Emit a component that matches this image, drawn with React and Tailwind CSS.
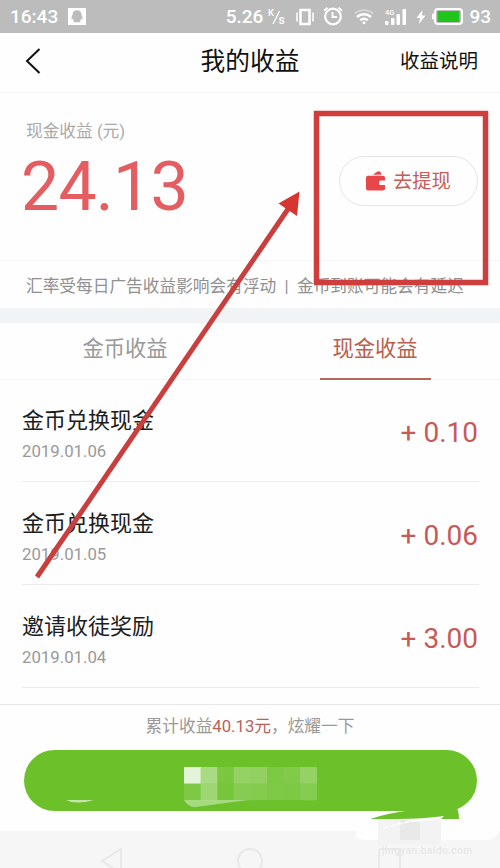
import React from "react";

const records = [
  { id: 1, title: "金币兑换现金", date: "2019.01.06", amount: "0.10" },
  { id: 2, title: "金币兑换现金", date: "2019.01.05", amount: "0.06" },
  { id: 3, title: "邀请收徒奖励", date: "2019.01.04", amount: "3.00" },
];

// x, y, opacity of each blurred block on the share button
const mosaic = [
  [0, 0, 0.82],
  [1, 0, 0.42],
  [2, 0, 0.1],
  [3, 0, 0.28],
  [4, 0, 0.26],
  [5, 0, 0.12],
  [6, 0, 0.15],
  [7, 0, 0.28],
  [0, 1, 0.12],
  [1, 1, 0.34],
  [2, 1, 0.08],
  [3, 1, 0.19],
  [4, 1, 0.17],
  [5, 1, 0.13],
  [6, 1, 0.12],
  [7, 1, 0.18],
];

const StatusBar = () => (
  <div className="h-[33px] shrink-0 bg-[#bcbcbc] flex items-center justify-between pl-[10px] pr-[9px] text-white">
    <div className="flex items-center gap-[10px]">
      <span className="text-[19px] leading-none font-medium">16:43</span>
      <svg width="18" height="17" viewBox="0 0 18 17">
        <rect width="18" height="17" fill="#fff" />
        <path
          d="M9 2.2c-3 0-4.5 2-4.5 4.6C3.8 8.5 3.2 10 3.6 11.5l1.2-.7c.3 1 .7 1.7 1.2 2.2-.9.5-.8 1.2.3 1.2h5.4c1.1 0 1.2-.7.3-1.2.5-.5.9-1.2 1.2-2.2l1.2.7c.4-1.5-.2-3-.9-4.7C13.5 4.2 12 2.200 9 2.200z"
          fill="#bcbcbc"
        />
      </svg>
    </div>

    <div className="flex items-center">
      <span className="text-[19px] leading-none font-medium">5.26</span>
      <svg className="ml-[5px]" width="18" height="20" viewBox="0 0 18 20" fill="#fff">
        <text x="0" y="9" fontSize="9.500" fontWeight="500">K</text>
        <path d="M5 17 11.500 4" stroke="#fff" strokeWidth="1.300" />
        <text x="10.500" y="17" fontSize="12" fontWeight="500">s</text>
      </svg>
      <svg className="ml-[10px]" width="18" height="18" viewBox="0 0 18 18" fill="none" stroke="#fff">
        <rect x="4.500" y="2" width="9" height="14" strokeWidth="2.500" />
        <path d="M1 4.500v9M17 4.500v9" strokeWidth="1.500" />
      </svg>
      <svg className="ml-[9px]" width="20" height="20" viewBox="0 0 20 20" fill="none" stroke="#fff" strokeWidth="2.200">
        <circle cx="10" cy="9.500" r="7.800" />
        <path d="M9.500 5v5h4.500" strokeWidth="1.900" />
        <path d="M1 3.700 4.500.7M19 3.700 15.500.7" strokeWidth="1.800" />
      </svg>
      <svg className="ml-[11px]" width="20" height="17" viewBox="0 0 20 17" fill="none" stroke="#fff">
        <path d="M1 5.500c5-4.600 13-4.600 18 0" strokeWidth="1.800" opacity=".4" />
        <path d="M3 9c4-3.700 10-3.700 14 0" strokeWidth="2.500" />
        <path d="M6.300 12.300c2.200-1.900 5.200-1.900 7.400 0" strokeWidth="2.300" />
        <circle cx="10" cy="14.800" r="1.500" fill="#fff" stroke="none" />
      </svg>
      <svg className="ml-[11px]" width="22" height="18" viewBox="0 0 22 18" fill="#fff">
        <text x="0" y="7" fontSize="7.500" fontWeight="500">4G</text>
        <rect x="0" y="13" width="3.500" height="4" rx="1" />
        <rect x="6" y="10" width="3.500" height="7" rx="1" />
        <rect x="11.500" y="6" width="3.500" height="11" rx="1" />
        <rect x="17.500" y="1" width="3.500" height="16" rx="1" />
      </svg>
      <svg className="ml-[9px]" width="10" height="14" viewBox="0 0 10 14" fill="#fff">
        <path d="M6.500 0 .5 8H4l-1 6 6.500-8.500H6z" />
      </svg>
      <svg className="ml-[6px]" width="31" height="17" viewBox="0 0 31 17">
        <rect x="3" y="1" width="27" height="15" rx="3" fill="none" stroke="#fff" strokeWidth="2" />
        <rect x="0" y="5.500" width="3" height="6" rx="1" fill="#fff" />
        <rect x="5.500" y="3" width="22" height="11" fill="#1fc41c" />
      </svg>
      <span className="ml-[6px] text-[19px] leading-none font-medium">93</span>
    </div>
  </div>
);

const Header = () => (
  <header className="h-[60px] shrink-0 grid grid-cols-3 items-center pl-[25px] pr-[22px] border-b border-[#f5f5f5] text-[#111]">
    <svg className="mb-[4px]" width="16" height="26" viewBox="0 0 16 26" fill="none" stroke="#111" strokeWidth="2">
      <path d="M14.500 1 2 13l12.500 12" />
    </svg>
    <h1 className="pr-[3px] text-[24.700px] leading-none text-center whitespace-nowrap">我的收益</h1>
    <a className="pb-px text-[19.500px] leading-none text-right whitespace-nowrap">收益说明</a>
  </header>
);

const Balance = () => (
  <section className="h-[215px] shrink-0 flex flex-col">
    <div className="h-[168px] flex justify-between pl-[22px] pr-[22px] border-b border-[#f7f7f7]">
      <div className="pt-[30px]">
        <p className="pl-[4px] text-[16.700px] leading-[18px] text-[#aaa]">现金收益 (元)</p>
        <p className="mt-[6px] -ml-px text-[68px] leading-[80px] tracking-[-0.8px] text-[#e35d61]">24.13</p>
      </div>
      <button className="mt-[63px] w-[139px] h-[50px] rounded-full border-[1.500px] border-[#e5e5e5] flex items-center pl-[26px] gap-[7px] text-[19.300px] text-[#c75c58]">
        <svg width="20" height="20" viewBox="0 0 20 20" fill="#e8474a">
          <path d="M7 3.800Q11 0 13 .2q2 .3 2.500 3.600z" />
          <path d="M2 4.800h15a2 2 0 0 1 2 2V9.500h-4a2 2 0 0 0-2 2.200 2 2 0 0 0 2 2.300h4v3.500a2 2 0 0 1-2 2H2a2 2 0 0 1-2-2V6.800a2 2 0 0 1 2-2z" />
        </svg>
        <span className="pt-px leading-none whitespace-nowrap">去提现</span>
      </button>
    </div>
    <p className="flex-1 flex items-center pl-[26px] pt-[5px] text-[16.700px] leading-none text-[#909090] whitespace-pre">
      汇率受每日广告收益影响会有浮动  |  金币到账可能会有延迟
    </p>
  </section>
);

const Tabs = () => (
  <div className="h-[57px] shrink-0 grid grid-cols-2 border-b border-[#f5f5f5] text-[21.300px] leading-none">
    <div className="flex justify-center pt-[15px] text-[#999]">金币收益</div>
    <div className="flex justify-center text-[#b9604f]">
      <span className="w-[111px] h-[57px] pt-[15px] text-center border-b-2 border-[#b5675c]">现金收益</span>
    </div>
  </div>
);

const RecordRow = ({ record }) => (
  <li className="h-[103px] flex justify-between border-b border-[#ececec]">
    <div className="pt-[31px]">
      <p className="text-[22px] leading-[22px] text-[#1c1c1c]">{record.title}</p>
      <p className="mt-[9px] text-[16.800px] leading-[20px] text-[#999]">{record.date}</p>
    </div>
    <p className="pt-[37px] pr-px text-[28px] leading-[34px] text-[#c75a58]">+ {record.amount}</p>
  </li>
);

const ShareBar = () => (
  <footer className="h-[127px] shrink-0 border-t border-[#e6e6e6] px-[24px]">
    <p className="h-[45px] flex items-center justify-center text-[16.700px] leading-none text-[#999]">
      累计收益<span className="text-[#b8625a]">40.13元</span>，炫耀一下
    </p>
    <button className="block w-[453px] h-[61px] rounded-full bg-[#6cc12b]">
      <svg width="453" height="61" viewBox="0 0 453 61" fill="#fff">
        {mosaic.map(([x, y, opacity]) => (
          <rect
            key={`${x}-${y}`}
            x={160 + x * 16.6}
            y={17 + y * 16.6}
            width="16.700"
            height="16.600"
            opacity={opacity}
          />
        ))}
        <path d="M160 50h64l-52 7q-7 1-12-7z" opacity=".4" />
        <path d="M42 50h28q-18 5-28 0z" opacity=".6" />
      </svg>
    </button>
  </footer>
);

const NavBar = () => (
  <div className="h-[37px] shrink-0 bg-[#f6f6f6] overflow-hidden">
    <svg width="500" height="37" viewBox="0 0 500 37" fill="none" stroke="#e9e9e9" strokeWidth="2">
      <path d="M121 18v24l-19-12z" />
      <circle cx="250" cy="30" r="12" />
      <rect x="379" y="18" width="21" height="24" rx="2" />
    </svg>
  </div>
);

// Hand-drawn marks over the page: frame, arrow and the smudged corner
const Annotations = () => (
  <svg className="absolute inset-0 pointer-events-none" width="500" height="868" viewBox="0 0 500 868">
    <rect x="316.500" y="113.500" width="169" height="169" fill="none" stroke="#cf3d3d" strokeWidth="5.500" />
    <path d="M37 577 288 209" stroke="#c93f3d" strokeWidth="5" />
    <path d="M299.500 191.500 278.500 203.500 297 216z" fill="#d7352f" />
    <path d="M355 835q5-14 32-16h93q10 3 18 6v8q-2 7-12 7H366q-9 0-11-5z" fill="#fefefe" />
    <path d="M370 819q18-6 42-9l42-5q5 3 5 14z" fill="#6cc12b" />
    <path d="M378 819h63v26h-63z" fill="#f3f3f3" />
    <path d="M400 819h20v21h-20z" fill="#e9e9e9" />
    <path d="M398 819q24 0 46-3l-3 3-24 3z" fill="#fafafa" />
    <path d="M384 828q16-5 36-8" fill="none" stroke="#fff" strokeWidth="1.500" strokeDasharray="5 2" />
    <text x="382" y="854" fontSize="10" fontWeight="500" textLength="90" fill="#e8e8e8">jingyan.baidu.com</text>
  </svg>
);

const App = () => {
  return (
    <div className="relative w-[500px] h-[868px] overflow-hidden bg-[#fefefe] flex flex-col font-['Roboto','Noto_Sans_CJK_SC',sans-serif]">
      <StatusBar />
      <Header />
      <Balance />
      <div className="h-[15px] shrink-0 bg-[#f2f3f5]" />
      <Tabs />
      <ul className="-mt-px h-[325px] shrink-0 pl-[22px] pr-[21px] overflow-hidden">
        {records.map((record) => (
          <RecordRow key={record.id} record={record} />
        ))}
      </ul>
      <ShareBar />
      <NavBar />
      <Annotations />
    </div>
  );
};

export default App;
